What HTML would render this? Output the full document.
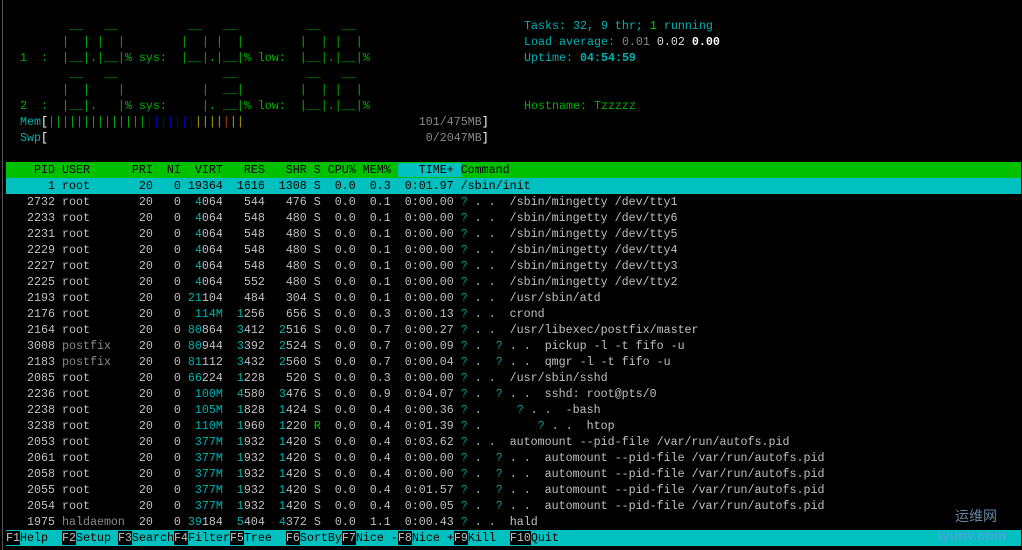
<!DOCTYPE html>
<html><head><meta charset="utf-8"><style>
html,body{margin:0;padding:0;background:#000;width:1022px;height:550px;overflow:hidden;position:relative}
.l{position:absolute;left:6px;height:16px;line-height:16px;white-space:pre;font-family:"Liberation Mono",monospace;font-size:11.67px;color:#c0c0c0}
.g{color:#00b000}.c{color:#00b0b0}.t{color:#009c9c}.w{color:#fff}.gr{color:#8a8a8a}.gn{color:#00d000}
.y{color:#b0a000}.o{color:#b04000}.b{color:#0000c0}
.hdr{background:#00c000;color:#000;width:1015px}
.sel{background:#00c0c0;color:#000;width:1015px}
.k{color:#c0c0c0}.kb{background:#00c0c0;color:#000}
</style></head><body>
<div style="position:absolute;left:2px;top:0;width:1px;height:550px;background:#555"></div>
<div class="l g" style="top:18px">         __   __          __   __          __   __</div>
<div class="l g" style="top:34px">        |  | |  |        |  | |  |        |  | |  |</div>
<div class="l g" style="top:50px">  1  :  |__|.|__|% sys:  |__|.|__|% low:  |__|.|__|%</div>
<div class="l g" style="top:66px">         __   __               __          __   __</div>
<div class="l g" style="top:82px">        |  |    |           |  __|        |  | |  |</div>
<div class="l g" style="top:98px">  2  :  |__|.   |% sys:     |. __|% low:  |__|.|__|%</div>
<div class="l" style="top:114px">  <span class="c">Mem</span><span class="w">[</span><span class="g">||||||||||||||</span><span class="b">|||||||</span><span class="y">||||</span><span class="o">|</span><span class="y">||</span>                         <span class="gr">101/475MB</span><span class="w">]</span></div>
<div class="l" style="top:130px">  <span class="c">Swp</span><span class="w">[</span>                                                      <span class="gr">0/2047MB</span><span class="w">]</span></div>
<div class="l c" style="top:18px;left:524px">Tasks: 32, 9 thr; <span class="gn">1</span> running</div>
<div class="l c" style="top:34px;left:524px">Load average: <span class="gr">0.01</span> <span style="color:#ddd">0.02</span> <span class="w" style="font-weight:bold">0.00</span></div>
<div class="l c" style="top:50px;left:524px">Uptime: <span style="font-weight:bold">04:54:59</span></div>
<div class="l g" style="top:98px;left:524px">Hostname: Tzzzzz</div>

<div class="l hdr" style="top:162px">    PID USER      PRI  NI  VIRT   RES   SHR S CPU% MEM% <span style="background:#00c0c0">   TIME+ </span>Command</div>
<div class="l sel" style="top:178px">      1 root       20   0 19364  1616  1308 S  0.0  0.3  0:01.97 /sbin/init</div>
<div class="l" style="top:194px">   2732 root       20   0  <span class="c">4</span>064   544   476 S  0.0  0.1  0:00.00 <span class="t">?</span> . .  /sbin/mingetty /dev/tty1</div>
<div class="l" style="top:210px">   2233 root       20   0  <span class="c">4</span>064   548   480 S  0.0  0.1  0:00.00 <span class="t">?</span> . .  /sbin/mingetty /dev/tty6</div>
<div class="l" style="top:226px">   2231 root       20   0  <span class="c">4</span>064   548   480 S  0.0  0.1  0:00.00 <span class="t">?</span> . .  /sbin/mingetty /dev/tty5</div>
<div class="l" style="top:242px">   2229 root       20   0  <span class="c">4</span>064   548   480 S  0.0  0.1  0:00.00 <span class="t">?</span> . .  /sbin/mingetty /dev/tty4</div>
<div class="l" style="top:258px">   2227 root       20   0  <span class="c">4</span>064   548   480 S  0.0  0.1  0:00.00 <span class="t">?</span> . .  /sbin/mingetty /dev/tty3</div>
<div class="l" style="top:274px">   2225 root       20   0  <span class="c">4</span>064   552   480 S  0.0  0.1  0:00.00 <span class="t">?</span> . .  /sbin/mingetty /dev/tty2</div>
<div class="l" style="top:290px">   2193 root       20   0 <span class="c">21</span>104   484   304 S  0.0  0.1  0:00.00 <span class="t">?</span> . .  /usr/sbin/atd</div>
<div class="l" style="top:306px">   2176 root       20   0  <span class="c">114M</span>  <span class="c">1</span>256   656 S  0.0  0.3  0:00.13 <span class="t">?</span> . .  crond</div>
<div class="l" style="top:322px">   2164 root       20   0 <span class="c">80</span>864  <span class="c">3</span>412  <span class="c">2</span>516 S  0.0  0.7  0:00.27 <span class="t">?</span> . .  /usr/libexec/postfix/master</div>
<div class="l" style="top:338px">   3008 <span class="gr">postfix</span>    20   0 <span class="c">80</span>944  <span class="c">3</span>392  <span class="c">2</span>524 S  0.0  0.7  0:00.09 <span class="t">?</span> .  <span class="t">?</span> . .  pickup -l -t fifo -u</div>
<div class="l" style="top:354px">   2183 <span class="gr">postfix</span>    20   0 <span class="c">81</span>112  <span class="c">3</span>432  <span class="c">2</span>560 S  0.0  0.7  0:00.04 <span class="t">?</span> .  <span class="t">?</span> . .  qmgr -l -t fifo -u</div>
<div class="l" style="top:370px">   2085 root       20   0 <span class="c">66</span>224  <span class="c">1</span>228   520 S  0.0  0.3  0:00.00 <span class="t">?</span> . .  /usr/sbin/sshd</div>
<div class="l" style="top:386px">   2236 root       20   0  <span class="c">100M</span>  <span class="c">4</span>580  <span class="c">3</span>476 S  0.0  0.9  0:04.07 <span class="t">?</span> .  <span class="t">?</span> . .  sshd: root@pts/0</div>
<div class="l" style="top:402px">   2238 root       20   0  <span class="c">105M</span>  <span class="c">1</span>828  <span class="c">1</span>424 S  0.0  0.4  0:00.36 <span class="t">?</span> .     <span class="t">?</span> . .  -bash</div>
<div class="l" style="top:418px">   3238 root       20   0  <span class="c">110M</span>  <span class="c">1</span>960  <span class="c">1</span>220 <span class="gn">R</span>  0.0  0.4  0:01.39 <span class="t">?</span> .        <span class="t">?</span> . .  htop</div>
<div class="l" style="top:434px">   2053 root       20   0  <span class="c">377M</span>  <span class="c">1</span>932  <span class="c">1</span>420 S  0.0  0.4  0:03.62 <span class="t">?</span> . .  automount --pid-file /var/run/autofs.pid</div>
<div class="l" style="top:450px">   2061 root       20   0  <span class="c">377M</span>  <span class="c">1</span>932  <span class="c">1</span>420 S  0.0  0.4  0:00.00 <span class="t">?</span> .  <span class="t">?</span> . .  automount --pid-file /var/run/autofs.pid</div>
<div class="l" style="top:466px">   2058 root       20   0  <span class="c">377M</span>  <span class="c">1</span>932  <span class="c">1</span>420 S  0.0  0.4  0:00.00 <span class="t">?</span> .  <span class="t">?</span> . .  automount --pid-file /var/run/autofs.pid</div>
<div class="l" style="top:482px">   2055 root       20   0  <span class="c">377M</span>  <span class="c">1</span>932  <span class="c">1</span>420 S  0.0  0.4  0:01.57 <span class="t">?</span> .  <span class="t">?</span> . .  automount --pid-file /var/run/autofs.pid</div>
<div class="l" style="top:498px">   2054 root       20   0  <span class="c">377M</span>  <span class="c">1</span>932  <span class="c">1</span>420 S  0.0  0.4  0:00.05 <span class="t">?</span> .  <span class="t">?</span> . .  automount --pid-file /var/run/autofs.pid</div>
<div class="l" style="top:514px">   1975 <span class="gr">haldaemon</span>  20   0 <span class="c">39</span>184  <span class="c">5</span>404  <span class="c">4</span>372 S  0.0  1.1  0:00.43 <span class="t">?</span> . .  hald</div>

<div class="l" style="top:530px;width:1015px;background:#00c0c0"><span class="k" style="background:#000">F1</span><span class="kb">Help  </span><span class="k" style="background:#000">F2</span><span class="kb">Setup </span><span class="k" style="background:#000">F3</span><span class="kb">Search</span><span class="k" style="background:#000">F4</span><span class="kb">Filter</span><span class="k" style="background:#000">F5</span><span class="kb">Tree  </span><span class="k" style="background:#000">F6</span><span class="kb">SortBy</span><span class="k" style="background:#000">F7</span><span class="kb">Nice -</span><span class="k" style="background:#000">F8</span><span class="kb">Nice +</span><span class="k" style="background:#000">F9</span><span class="kb">Kill  </span><span class="k" style="background:#000">F10</span><span class="kb">Quit</span></div>

<div style="position:absolute;left:955px;top:506px;font-family:'Liberation Sans','Noto Sans CJK SC',sans-serif;font-size:14px;color:#7fa8c8;opacity:.8">运维网</div>
<div style="position:absolute;left:938px;top:527px;font-family:'Liberation Sans',sans-serif;font-size:14px;font-weight:bold;color:#5aa0e0;opacity:.8">iyunv.com</div>
</body></html>
